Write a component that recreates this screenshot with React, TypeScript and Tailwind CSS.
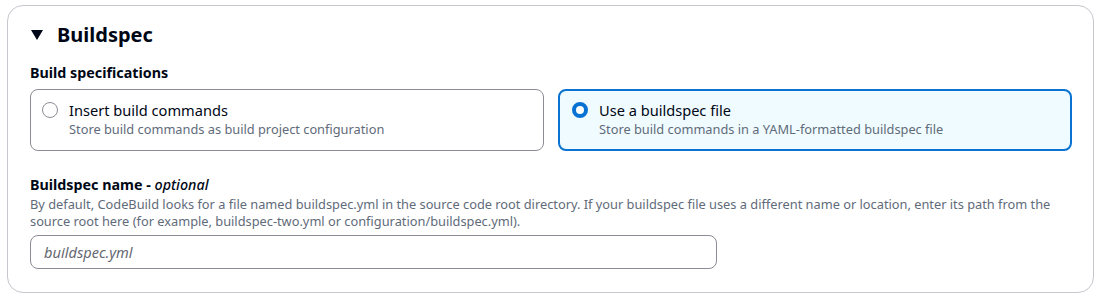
import { useState } from "react";

const font = { fontFamily: '"Noto Sans", "Open Sans", Arial, sans-serif' };

type Option = { id: string; label: string; desc: string };

const options: Option[] = [
  { id: "inline", label: "Insert build commands", desc: "Store build commands as build project configuration" },
  { id: "file", label: "Use a buildspec file", desc: "Store build commands in a YAML-formatted buildspec file" },
];

function RadioTile({ opt, checked, onSelect }: { opt: Option; checked: boolean; onSelect: () => void }) {
  return (
    <button
      type="button"
      onClick={onSelect}
      className={`flex h-[62px] items-start gap-[11px] rounded-[8px] text-left ${
        checked
          ? "border-2 border-[#0972d3] bg-[#f0fbff] pl-[12px] pt-[8px]"
          : "border border-[#8c8c94] bg-white pl-[11px] pt-[9px]"
      }`}
    >
      <span
        className={`mt-[3px] h-[16px] w-[16px] shrink-0 rounded-full ${
          checked ? "border-[4.5px] border-[#0972d3] bg-white" : "border-[1.5px] border-[#8c8c94] bg-white"
        }`}
      />
      <span className="flex flex-col">
        <span className="text-[14.6px] leading-[22px] text-[#000716]">{opt.label}</span>
        <span className="text-[12.8px] leading-[16px] text-[#5f6b7a]">{opt.desc}</span>
      </span>
    </button>
  );
}

export default function App() {
  const [choice, setChoice] = useState("file");
  const [name, setName] = useState("");

  return (
    <div className="min-h-screen bg-white pl-[7px] pt-[5px] pr-px" style={font}>
      <div className="h-[288px] rounded-[16px] border border-[#c6c6cd] bg-white pl-[22px] pr-[21px] pt-[15px]">
        <div className="flex items-center gap-[14px]">
          <svg width="12" height="10" viewBox="0 0 12 10" className="ml-px">
            <path d="M0 0 L12 0 L6 10 Z" fill="#000716" />
          </svg>
          <h2 className="text-[20px] leading-[28px] font-bold text-[#000716]">Buildspec</h2>
        </div>

        <div className="mt-[15px] text-[14.3px] leading-[18px] font-bold text-[#000716]">Build specifications</div>
        <div className="mt-[7px] grid grid-cols-2 gap-[14px]">
          {options.map((o) => (
            <RadioTile key={o.id} opt={o} checked={choice === o.id} onSelect={() => setChoice(o.id)} />
          ))}
        </div>

        <div className="mt-[24px] text-[14.3px] leading-[20px] font-bold text-[#000716]">
          Buildspec name - <i className="font-medium">optional</i>
        </div>
        <p className="mt-px text-[12.8px] leading-[17px] text-[#5f6b7a]">
          By default, CodeBuild looks for a file named buildspec.yml in the source code root directory. If your buildspec
          file uses a different name or location, enter its path from the source root here (for example,
          buildspec-two.yml or configuration/buildspec.yml).
        </p>
        <input
          value={name}
          onChange={(e) => setName(e.target.value)}
          placeholder="buildspec.yml"
          className="mt-[5px] h-[34px] w-[687px] rounded-[8px] border border-[#8c8c94] px-[13px] text-[14.6px] text-[#000716] outline-none placeholder:italic placeholder:text-[#656871]"
        />
      </div>
    </div>
  );
}
